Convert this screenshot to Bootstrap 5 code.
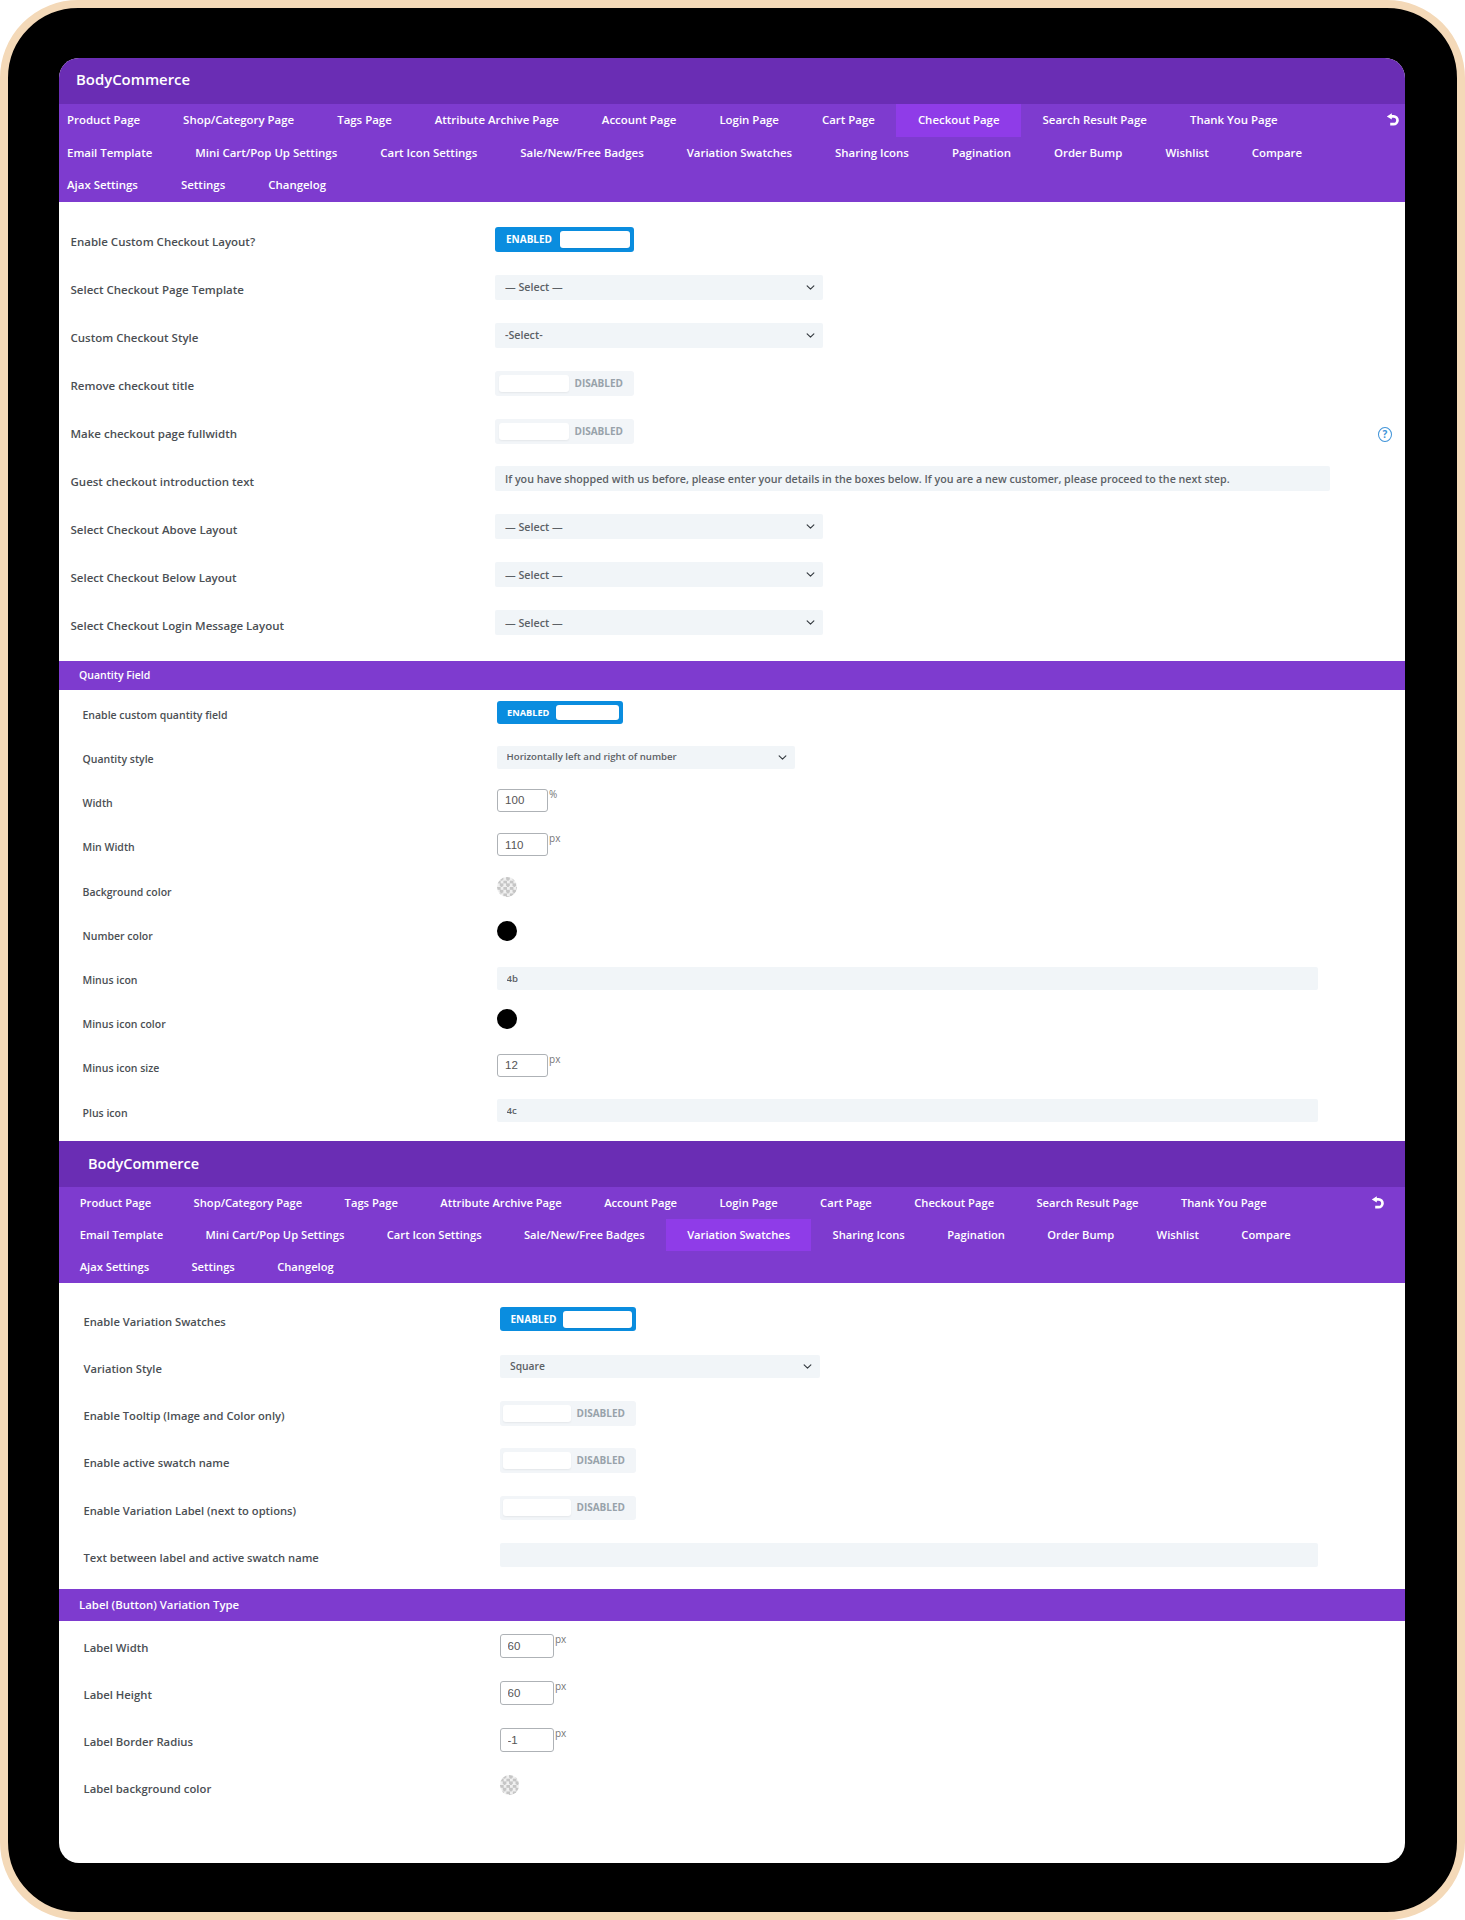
<!DOCTYPE html>
<html lang="en">
<head>
<meta charset="UTF-8">
<title>BodyCommerce settings</title>
<link href="https://cdn.jsdelivr.net/npm/bootstrap@5.3.3/dist/css/bootstrap.min.css" rel="stylesheet">
<style>
    body { margin: 0; background: #fff; font-family: "Open Sans", "Liberation Sans", sans-serif; }
    .device { height: 1920px; padding: 50px 52px 49px 51px; background: #000; border: 8px solid #f4d9b8; border-radius: 78px; }
    .screen { height: 100%; background: #fff; border-radius: 20px; overflow: hidden; }
    .brand-bar { height: 46px; background: #6a2db4; color: #fff; font-size: 14.9px; font-weight: 600; padding: 0 0 3px 17px; }
    .panel-two .brand-bar { padding: 0 0 0 29px; font-size: 14.5px; }
    .tab-area { position: relative; background: #7e3bcf; overflow: hidden; }
    .tab-strip { list-style: none; margin: 0 0 0 -13.5px; padding: 0 30px 0 0; display: flex; flex-wrap: wrap; }
    .panel-two .tab-strip { margin-left: -0.5px; }
    .tab-strip a { display: block; height: 32.67px; line-height: 32.6px; padding: 0 21.5px; color: #fff; font-size: 11.45px; font-weight: 600; text-decoration: none; }
    .panel-two .tab-strip a { height: 32px; line-height: 32px; padding: 0 21.2px; font-size: 11.2px; }
    .tab-strip a.on { background: #8f3ce8; }
    .undo-btn { position: absolute; top: 9px; right: 5px; }
    .panel-two .undo-btn { right: 20px; top: 9px; }
    .opt-list { display: flex; flex-direction: column; }
    .opt-row { display: flex; height: 30px; align-items: flex-start; }
    .opt-label { flex: none; margin: 0; font-size: 11.5px; font-weight: 600; line-height: 20px; color: #4b4f54; }
    .set-a { padding: 25px 0 20.5px 11.5px; gap: 17.9px; }
    .set-a .opt-label { width: 424px; margin-top: 5.5px; }
    .set-b { padding: 11.6px 0 11.6px 23.5px; gap: 14.2px; }
    .set-b .opt-label { width: 414.6px; margin-top: 3.4px; font-size: 10.5px; }
    .set-c { padding: 24px 0 16px 24.5px; gap: 17.2px; }
    .set-c .opt-label { width: 416px; margin-top: 5px; font-size: 11.2px; }
    .set-d { padding: 12.3px 0 0 24.5px; gap: 17px; }
    .set-d .opt-label { width: 416px; margin-top: 4.2px; font-size: 11.3px; }
    .sect-bar { background: #7e3bcf; color: #fff; font-weight: 600; padding-left: 20px; }
    .bar-small { height: 29.3px; line-height: 28.5px; font-size: 10.5px; }
    .bar-big { height: 32.7px; line-height: 31px; font-size: 11.4px; }
    .tog { display: flex; align-items: center; width: 139.5px; height: 25px; border-radius: 3px; font-size: 10px; font-weight: 700; background: #f2f5f8; color: #98a2aa; padding: 0 4px; }
    .tog i { display: block; width: 70px; height: 17px; background: #fff; border-radius: 3px; box-shadow: 0 1px 2px rgba(0,0,0,.06); }
    .tog span { margin-left: 6px; }
    .tog.live { background: #0a8ddf; color: #fff; padding-left: 11.5px; }
    .tog.live i { margin-left: auto; }
    .tog.live span { margin-left: 0; }
    .set-b .tog { width: 126.4px; height: 22.4px; font-size: 9.2px; }
    .set-b .tog i { width: 63px; height: 15.5px; }
    .set-b .tog.live { padding-left: 10px; }
    .set-c .tog { width: 136.3px; height: 24.7px; padding: 0 3px; }
    .set-c .tog i { width: 68.5px; }
    .set-c .tog span { margin-left: 5.5px; }
    .set-c .tog.live { padding-left: 11px; padding-right: 4px; }
    .set-c .tog.live span { margin-left: 0; }
    .field-sel.form-select, .field-txt.form-control { height: 25px; min-height: 0; border: 0; border-radius: 2px; background-color: #f1f5f8; color: #5c6166; font-size: 10.7px; font-weight: 600; padding: 0 10.5px; box-shadow: none; }
    .field-sel.form-select { background-size: 11px 9px; background-position: right 7px center; }
    .sel-a.form-select { width: 328.5px; }
    .txt-a.form-control { width: 835px; }
    .set-b .field-sel, .set-b .field-txt { height: 23px; font-size: 9.6px; padding-left: 9.5px; }
    .sel-b.form-select { width: 298px; }
    .txt-b.form-control { width: 821px; }
    .sel-c.form-select { width: 320.6px; height: 23.5px; margin-top: 1px; font-size: 10.3px; }
    .txt-c.form-control { width: 818px; height: 24.5px; }
    .num-box { display: flex; align-items: flex-start; font-size: 10px; color: #777; line-height: 11px; margin-top: -1px; }
    .num-box input.form-control { width: 51px; height: 23px; min-height: 0; padding: 0 7px; margin-right: 1px; border: 1px solid #aeb2b6; border-radius: 3px; font-family: "Liberation Sans", sans-serif; font-size: 11.5px; color: #555; }
    .set-d .num-box { margin-top: 0; }
    .set-d .num-box input.form-control { width: 54.5px; height: 24.5px; }
    .dot { display: block; width: 19.5px; height: 20px; margin-top: -1.5px; border-radius: 50%; background: #000; }
    .dot.clear { background: repeating-conic-gradient(#c6c6c6 0 25%, #f0f0f0 0 50%) 0 0 / 6.4px 6.4px; }
    .set-d .dot { margin-top: 0; }
    .help-mark { display: flex; align-items: center; justify-content: center; width: 14px; height: 15px; margin: 8px 13px 0 auto; border: 1.4px solid #3f93d8; border-radius: 50%; color: #3f93d8; font-size: 10px; font-weight: 700; line-height: 1; }
</style>
</head>
<body>
<div class="device">
    <div class="screen">
        <div class="panel-one">
            <div class="brand-bar d-flex align-items-center">BodyCommerce</div>
            <div class="tab-area">
                <ul class="tab-strip">
                    <li><a href="#">Product Page</a></li>
                    <li><a href="#">Shop/Category Page</a></li>
                    <li><a href="#">Tags Page</a></li>
                    <li><a href="#">Attribute Archive Page</a></li>
                    <li><a href="#">Account Page</a></li>
                    <li><a href="#">Login Page</a></li>
                    <li><a href="#">Cart Page</a></li>
                    <li><a href="#" class="on">Checkout Page</a></li>
                    <li><a href="#">Search Result Page</a></li>
                    <li><a href="#">Thank You Page</a></li>
                    <li><a href="#">Email Template</a></li>
                    <li><a href="#">Mini Cart/Pop Up Settings</a></li>
                    <li><a href="#">Cart Icon Settings</a></li>
                    <li><a href="#">Sale/New/Free Badges</a></li>
                    <li><a href="#">Variation Swatches</a></li>
                    <li><a href="#">Sharing Icons</a></li>
                    <li><a href="#">Pagination</a></li>
                    <li><a href="#">Order Bump</a></li>
                    <li><a href="#">Wishlist</a></li>
                    <li><a href="#">Compare</a></li>
                    <li><a href="#">Ajax Settings</a></li>
                    <li><a href="#">Settings</a></li>
                    <li><a href="#">Changelog</a></li>
                </ul>
                <svg class="undo-btn" width="14" height="14" viewBox="0 0 14 14" fill="none" stroke="#fff" stroke-width="2.7"><path d="M5 3.4h2.6a3.9 3.9 0 1 1 0 7.8H4.2"/><path d="M.8 3.4 5.8.2v6.4z" fill="#fff" stroke="none"/></svg>
            </div>
            <div class="opt-list set-a">
                <div class="opt-row"><p class="opt-label">Enable Custom Checkout Layout?</p><div class="tog live"><span>ENABLED</span><i></i></div></div>
                <div class="opt-row"><p class="opt-label">Select Checkout Page Template</p><select class="form-select field-sel sel-a"><option>— Select —</option></select></div>
                <div class="opt-row"><p class="opt-label">Custom Checkout Style</p><select class="form-select field-sel sel-a"><option>-Select-</option></select></div>
                <div class="opt-row"><p class="opt-label">Remove checkout title</p><div class="tog"><i></i><span>DISABLED</span></div></div>
                <div class="opt-row"><p class="opt-label">Make checkout page fullwidth</p><div class="tog"><i></i><span>DISABLED</span></div><span class="help-mark">?</span></div>
                <div class="opt-row"><p class="opt-label">Guest checkout introduction text</p><input class="form-control field-txt txt-a" type="text" value="If you have shopped with us before, please enter your details in the boxes below. If you are a new customer, please proceed to the next step."></div>
                <div class="opt-row"><p class="opt-label">Select Checkout Above Layout</p><select class="form-select field-sel sel-a"><option>— Select —</option></select></div>
                <div class="opt-row"><p class="opt-label">Select Checkout Below Layout</p><select class="form-select field-sel sel-a"><option>— Select —</option></select></div>
                <div class="opt-row"><p class="opt-label">Select Checkout Login Message Layout</p><select class="form-select field-sel sel-a"><option>— Select —</option></select></div>
            </div>
            <div class="sect-bar bar-small">Quantity Field</div>
            <div class="opt-list set-b">
                <div class="opt-row"><p class="opt-label">Enable custom quantity field</p><div class="tog live"><span>ENABLED</span><i></i></div></div>
                <div class="opt-row"><p class="opt-label">Quantity style</p><select class="form-select field-sel sel-b"><option>Horizontally left and right of number</option></select></div>
                <div class="opt-row"><p class="opt-label">Width</p><div class="num-box"><input class="form-control" type="text" value="100">%</div></div>
                <div class="opt-row"><p class="opt-label">Min Width</p><div class="num-box"><input class="form-control" type="text" value="110">px</div></div>
                <div class="opt-row"><p class="opt-label">Background color</p><span class="dot clear"></span></div>
                <div class="opt-row"><p class="opt-label">Number color</p><span class="dot"></span></div>
                <div class="opt-row"><p class="opt-label">Minus icon</p><input class="form-control field-txt txt-b" type="text" value="4b"></div>
                <div class="opt-row"><p class="opt-label">Minus icon color</p><span class="dot"></span></div>
                <div class="opt-row"><p class="opt-label">Minus icon size</p><div class="num-box"><input class="form-control" type="text" value="12">px</div></div>
                <div class="opt-row"><p class="opt-label">Plus icon</p><input class="form-control field-txt txt-b" type="text" value="4c"></div>
            </div>
        </div>
        <div class="panel-two">
            <div class="brand-bar d-flex align-items-center">BodyCommerce</div>
            <div class="tab-area">
                <ul class="tab-strip">
                    <li><a href="#">Product Page</a></li>
                    <li><a href="#">Shop/Category Page</a></li>
                    <li><a href="#">Tags Page</a></li>
                    <li><a href="#">Attribute Archive Page</a></li>
                    <li><a href="#">Account Page</a></li>
                    <li><a href="#">Login Page</a></li>
                    <li><a href="#">Cart Page</a></li>
                    <li><a href="#">Checkout Page</a></li>
                    <li><a href="#">Search Result Page</a></li>
                    <li><a href="#">Thank You Page</a></li>
                    <li><a href="#">Email Template</a></li>
                    <li><a href="#">Mini Cart/Pop Up Settings</a></li>
                    <li><a href="#">Cart Icon Settings</a></li>
                    <li><a href="#">Sale/New/Free Badges</a></li>
                    <li><a href="#" class="on">Variation Swatches</a></li>
                    <li><a href="#">Sharing Icons</a></li>
                    <li><a href="#">Pagination</a></li>
                    <li><a href="#">Order Bump</a></li>
                    <li><a href="#">Wishlist</a></li>
                    <li><a href="#">Compare</a></li>
                    <li><a href="#">Ajax Settings</a></li>
                    <li><a href="#">Settings</a></li>
                    <li><a href="#">Changelog</a></li>
                </ul>
                <svg class="undo-btn" width="14" height="14" viewBox="0 0 14 14" fill="none" stroke="#fff" stroke-width="2.7"><path d="M5 3.4h2.6a3.9 3.9 0 1 1 0 7.8H4.2"/><path d="M.8 3.4 5.8.2v6.4z" fill="#fff" stroke="none"/></svg>
            </div>
            <div class="opt-list set-c">
                <div class="opt-row"><p class="opt-label">Enable Variation Swatches</p><div class="tog live"><span>ENABLED</span><i></i></div></div>
                <div class="opt-row"><p class="opt-label">Variation Style</p><select class="form-select field-sel sel-c"><option>Square</option></select></div>
                <div class="opt-row"><p class="opt-label">Enable Tooltip (Image and Color only)</p><div class="tog"><i></i><span>DISABLED</span></div></div>
                <div class="opt-row"><p class="opt-label">Enable active swatch name</p><div class="tog"><i></i><span>DISABLED</span></div></div>
                <div class="opt-row"><p class="opt-label">Enable Variation Label (next to options)</p><div class="tog"><i></i><span>DISABLED</span></div></div>
                <div class="opt-row"><p class="opt-label">Text between label and active swatch name</p><input class="form-control field-txt txt-c" type="text"></div>
            </div>
            <div class="sect-bar bar-big">Label (Button) Variation Type</div>
            <div class="opt-list set-d">
                <div class="opt-row"><p class="opt-label">Label Width</p><div class="num-box"><input class="form-control" type="text" value="60">px</div></div>
                <div class="opt-row"><p class="opt-label">Label Height</p><div class="num-box"><input class="form-control" type="text" value="60">px</div></div>
                <div class="opt-row"><p class="opt-label">Label Border Radius</p><div class="num-box"><input class="form-control" type="text" value="-1">px</div></div>
                <div class="opt-row"><p class="opt-label">Label background color</p><span class="dot clear"></span></div>
            </div>
        </div>
    </div>
</div>
<script src="https://cdn.jsdelivr.net/npm/bootstrap@5.3.3/dist/js/bootstrap.bundle.min.js"></script>
</body>
</html>
